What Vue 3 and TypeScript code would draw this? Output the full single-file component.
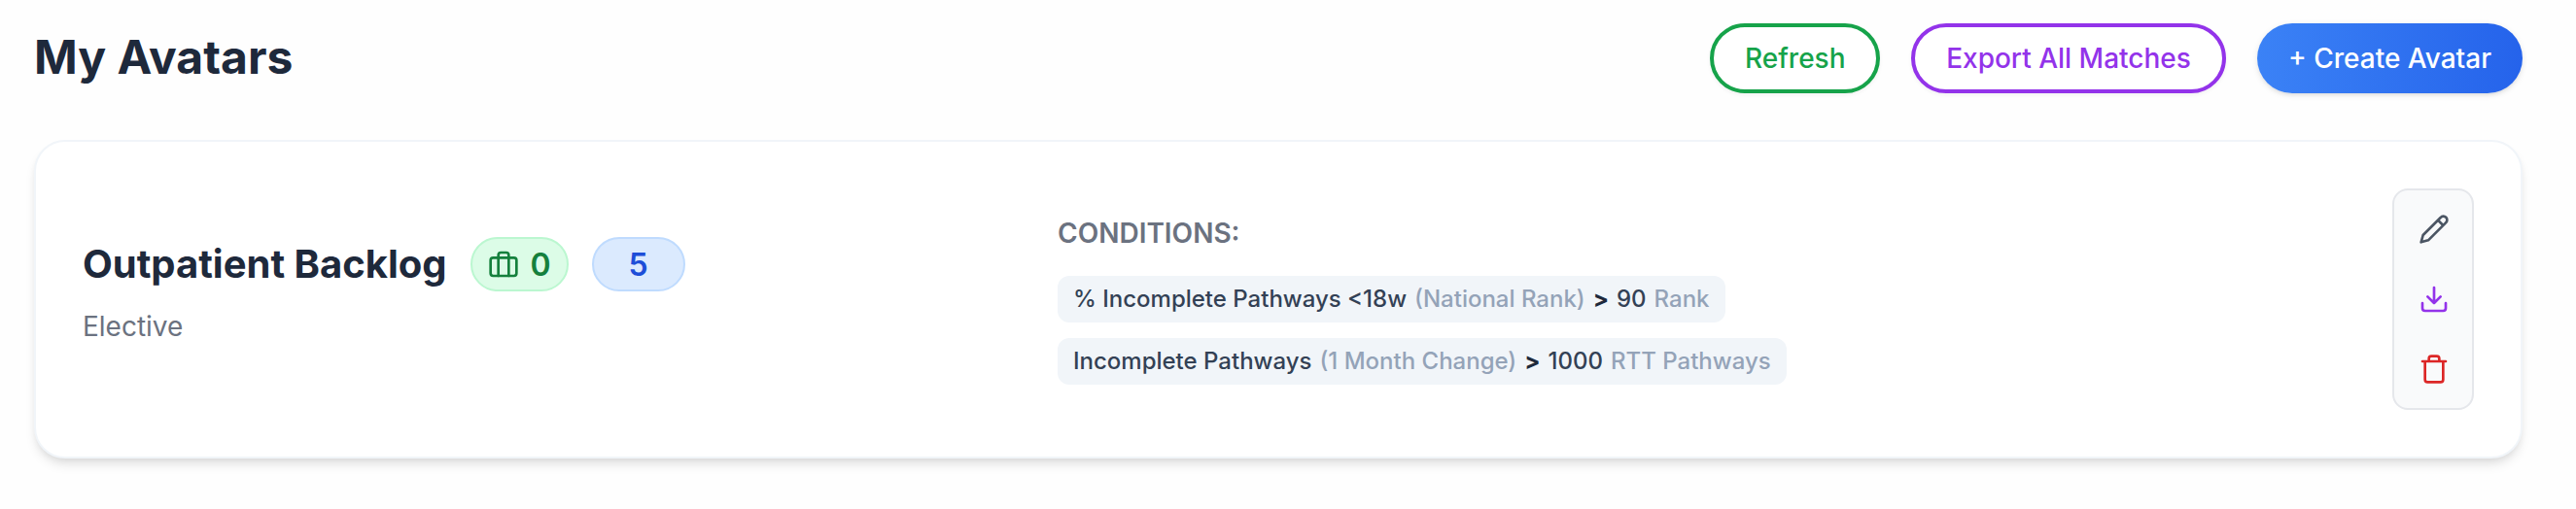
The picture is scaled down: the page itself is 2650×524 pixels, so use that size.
<script setup lang="ts">
interface Condition {
  metric: string
  detail: string
  operator: string
  value: number
  unit: string
}

const conditions: Condition[] = [
  { metric: '% Incomplete Pathways <18w', detail: '(National Rank)', operator: '>', value: 90, unit: 'Rank' },
  { metric: 'Incomplete Pathways', detail: '(1 Month Change)', operator: '>', value: 1000, unit: 'RTT Pathways' },
]
</script>

<template>
  <main class="page">
    <header class="top">
      <h1>My Avatars</h1>
      <div class="buttons">
        <button class="btn refresh">Refresh</button>
        <button class="btn export">Export All Matches</button>
        <button class="btn create">+ Create Avatar</button>
      </div>
    </header>
    <section class="card">
      <div class="summary">
        <div class="name-row">
          <h2>Outpatient Backlog</h2>
          <span class="badge green">
            <svg class="icon" viewBox="0 0 24 24">
              <rect x="2" y="7" width="20" height="14" rx="2" />
              <path d="M16 21V5a2 2 0 0 0-2-2h-4a2 2 0 0 0-2 2v16" />
            </svg>
            <span>0</span>
          </span>
          <span class="badge blue">5</span>
        </div>
        <p class="type">Elective</p>
      </div>
      <div class="conditions">
        <h3>CONDITIONS:</h3>
        <div v-for="c in conditions" :key="c.metric" class="pill">
          <span>{{ c.metric }}</span>
          <span class="muted">{{ c.detail }}</span>
          <span class="op">{{ c.operator }}</span>
          <span>{{ c.value }}</span>
          <span class="muted">{{ c.unit }}</span>
        </div>
      </div>
      <div class="actions">
        <button class="act edit" aria-label="Edit">
          <svg class="icon" viewBox="0 0 24 24"><path d="M17 3a2.85 2.83 0 1 1 4 4L7.5 20.5 2 22l1.5-5.5ZM15 5l4 4" /></svg>
        </button>
        <button class="act download" aria-label="Download">
          <svg class="icon" viewBox="0 0 24 24"><path d="M21 15v4a2 2 0 0 1-2 2H5a2 2 0 0 1-2-2v-4M7 10l5 5 5-5M12 15V3" /></svg>
        </button>
        <button class="act remove" aria-label="Delete">
          <svg class="icon" viewBox="0 0 24 24"><path d="M3 6h18M19 6v14a2 2 0 0 1-2 2H7a2 2 0 0 1-2-2V6M8 6V4a2 2 0 0 1 2-2h4a2 2 0 0 1 2 2v2" /></svg>
        </button>
      </div>
    </section>
  </main>
</template>

<style>
body { background: #fefefe; }
</style>

<style scoped>
* { box-sizing: border-box; margin: 0; }
.page { min-height: 524px; padding: 24px 55px 52px 35px; font-family: Inter, sans-serif; }
.top { display: flex; justify-content: space-between; align-items: flex-start; height: 72px; }
h1 { font-size: 48px; line-height: 70px; font-weight: 700; color: #1e293b; }
.buttons { display: flex; gap: 32px; }
.btn { height: 72px; padding: 0 32px; border: 4px solid; border-radius: 36px; background: #fff; font: 500 28px/40px Inter, sans-serif; white-space: nowrap; box-shadow: 0 2px 4px rgba(0, 0, 0, 0.05); }
.refresh { color: #16a34a; width: 175px; }
.export { color: #9333ea; width: 324px; }
.create { width: 273px; border: 0; color: #fff; background: linear-gradient(to right, #3b82f6, #2563eb); box-shadow: 0 2px 6px rgba(0, 0, 0, 0.1), 0 2px 4px -2px rgba(0, 0, 0, 0.1); }
.card { margin-top: 48px; height: 328px; padding: 48px; border: 2px solid #f1f5f9; border-radius: 32px; background: #fff; display: grid; grid-template-columns: 1003px 1fr 84px; align-items: center; box-shadow: 0 8px 12px -2px rgba(0, 0, 0, 0.1), 0 4px 8px -4px rgba(0, 0, 0, 0.1); }
.summary { padding-bottom: 16px; }
.name-row { display: flex; align-items: center; gap: 24px; }
h2 { font-size: 40px; line-height: 56px; font-weight: 700; color: #1e293b; white-space: nowrap; }
.badge { display: flex; align-items: center; justify-content: center; height: 56px; border: 2px solid; border-radius: 28px; font-size: 32px; font-weight: 600; }
.green { width: 101px; gap: 12px; background: #dcfce7; border-color: #bbf7d0; color: #15803d; }
.blue { width: 96px; background: #dbeafe; border-color: #bfdbfe; color: #1d4ed8; }
.type { margin-top: 16px; font-size: 28px; line-height: 40px; color: #6b7280; }
.conditions { display: flex; flex-direction: column; align-items: flex-start; gap: 16px; }
h3 { font-size: 28px; line-height: 40px; margin-bottom: 8px; font-weight: 600; color: #6b7280; }
.pill { display: flex; gap: 8px; height: 48px; padding: 0 16px; border-radius: 12px; background: #f1f5f9; color: #334155; font-size: 24px; line-height: 48px; font-weight: 500; white-space: nowrap; }
.muted { color: #94a3b8; }
.op { font-weight: 700; color: #1e293b; }
.actions { height: 228px; padding-left: 2px; border: 2px solid #e5e7eb; border-radius: 16px; background: #f9fafb; display: flex; flex-direction: column; align-items: center; justify-content: center; gap: 40px; }
.act { display: block; width: 32px; height: 32px; padding: 0; border: 0; background: none; }
.icon { display: block; flex: none; width: 32px; height: 32px; fill: none; stroke: currentColor; stroke-width: 2; stroke-linecap: round; stroke-linejoin: round; }
.edit { color: #4b5563; }
.download { color: #9333ea; }
.remove { color: #dc2626; }
</style>
